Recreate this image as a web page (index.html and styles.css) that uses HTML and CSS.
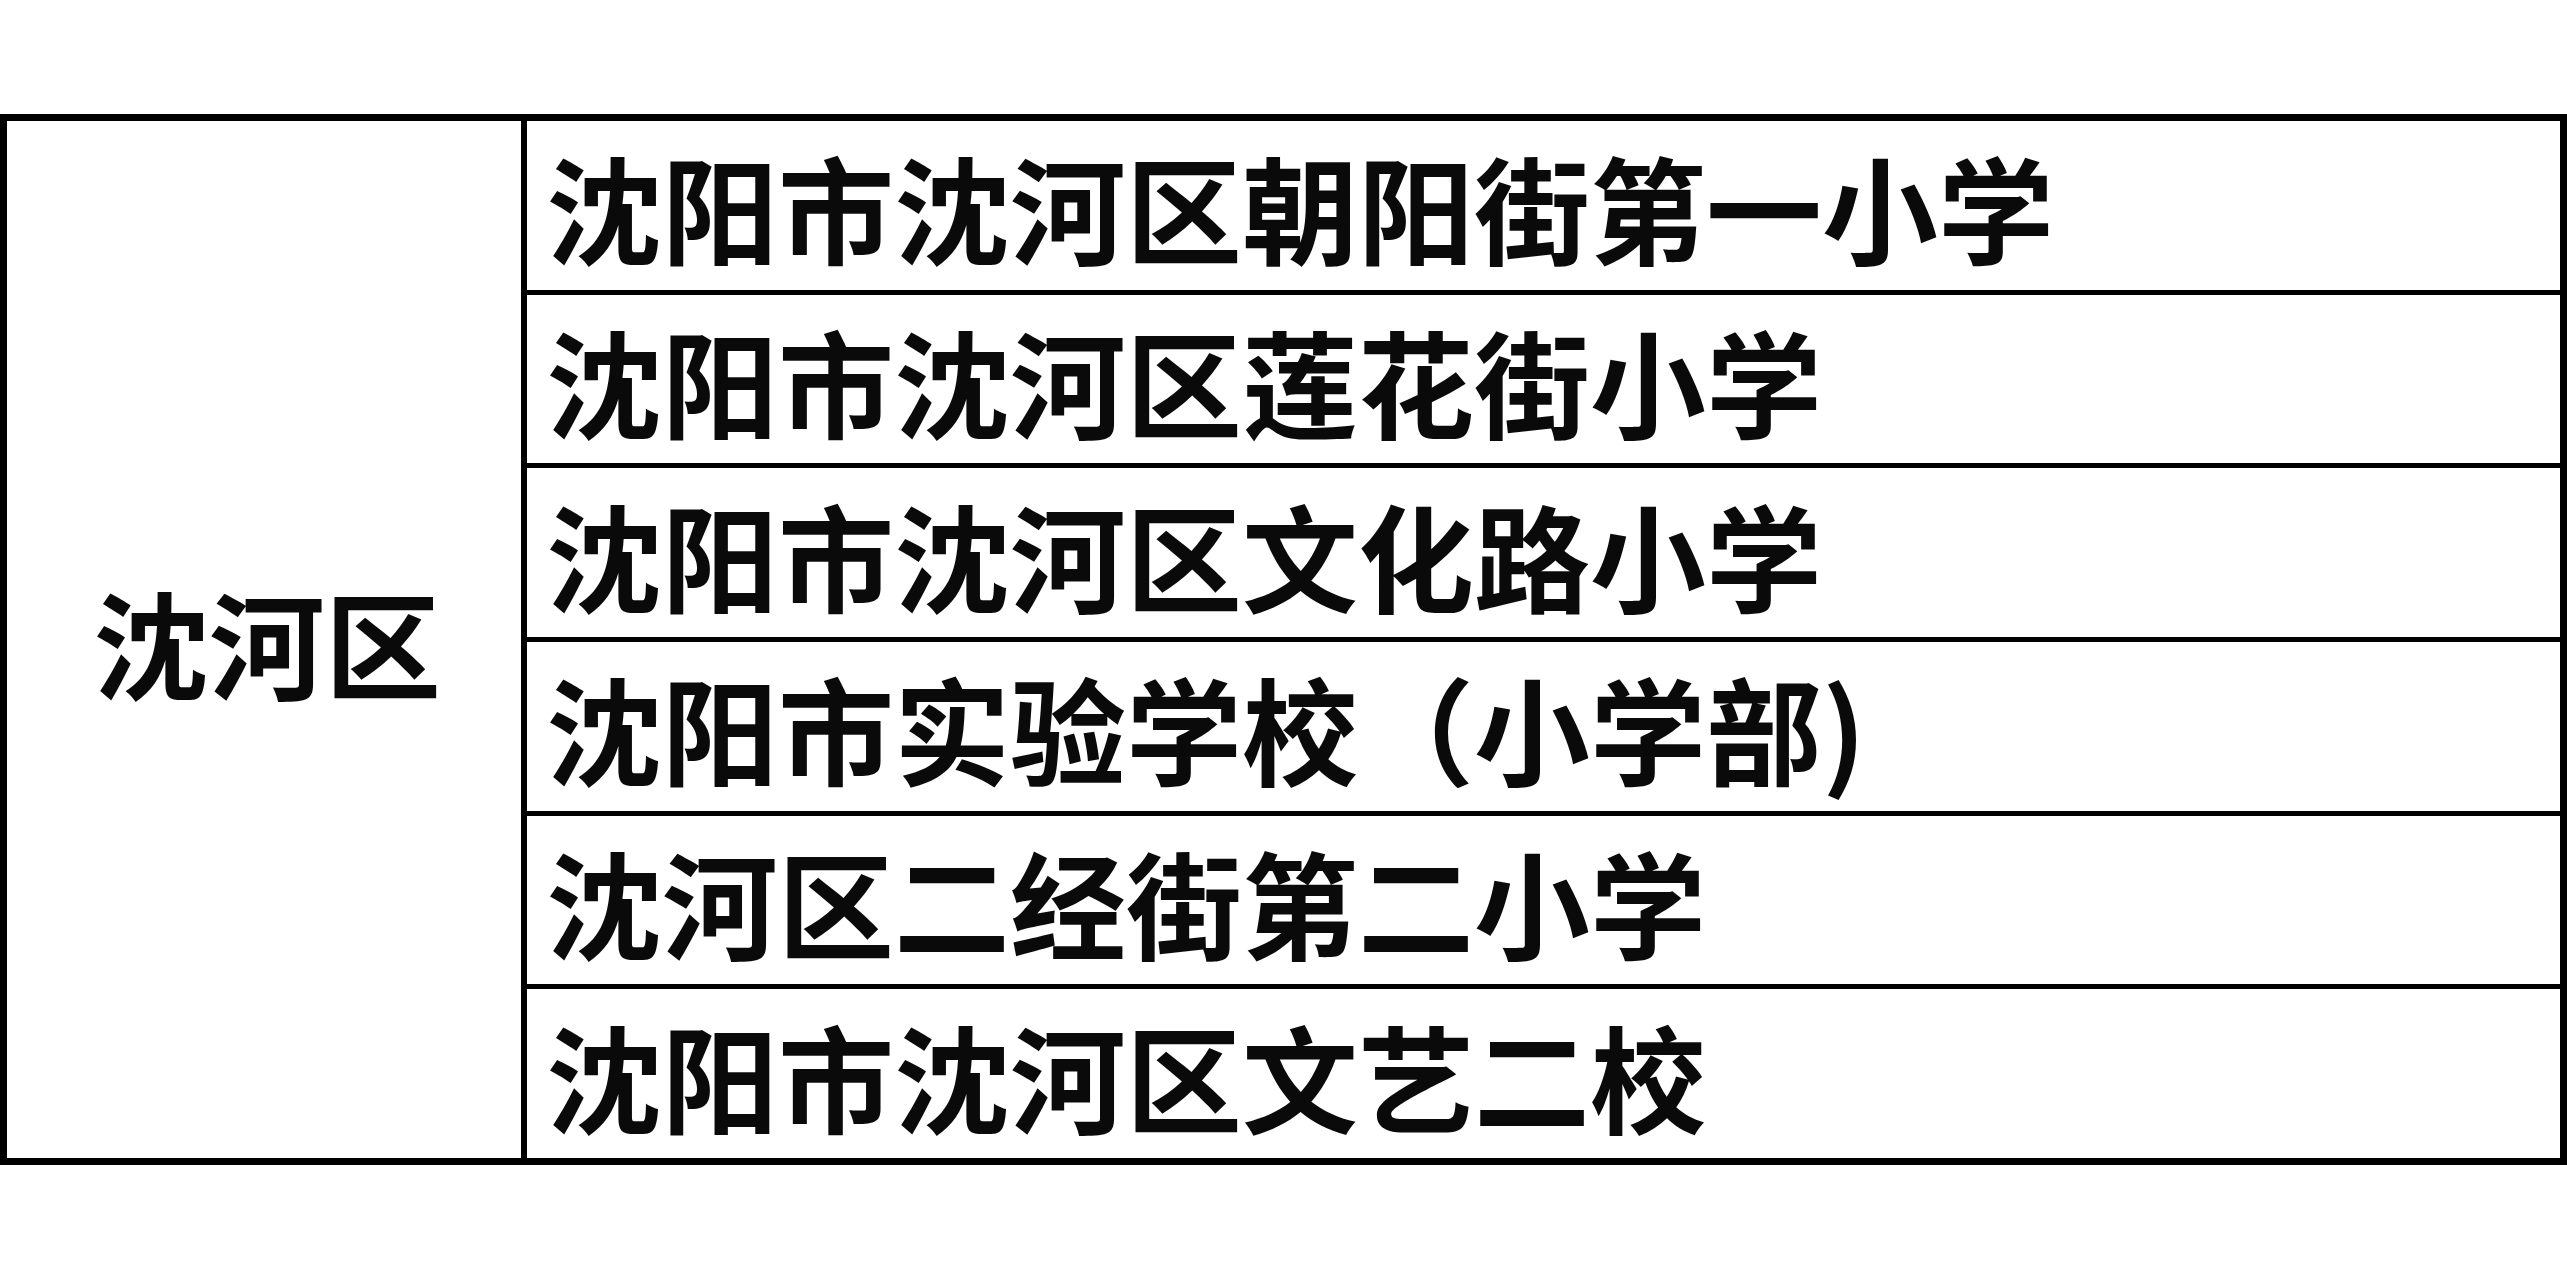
FILE: index.html
```html
<!DOCTYPE html>
<html lang="zh-CN">
<head>
<meta charset="utf-8">
<title>沈河区小学</title>
<link rel="stylesheet" href="styles.css">
</head>
<body>
<div class="page">
  <div class="sheet">
    <div class="district">沈河区</div>
    <div class="school">沈阳市沈河区朝阳街第一小学</div>
    <div class="school">沈阳市沈河区莲花街小学</div>
    <div class="school">沈阳市沈河区文化路小学</div>
    <div class="school">沈阳市实验学校（小学部)</div>
    <div class="school">沈河区二经街第二小学</div>
    <div class="school">沈阳市沈河区文艺二校</div>
  </div>
</div>
</body>
</html>
```

FILE: styles.css
```css
html, body {
  margin: 0;
  padding: 0;
  background: #ffffff;
}

.page {
  width: 2567px;
  height: 1280px;
  padding-top: 114px;
  box-sizing: border-box;
  overflow: hidden;
}

.sheet {
  box-sizing: border-box;
  width: 2567px;
  height: 1051px;
  border: 7px solid #000;
  background: #000;
  display: grid;
  grid-template-columns: 514px 1fr;
  grid-template-rows: repeat(6, 1fr);
  column-gap: 6px;
  row-gap: 5px;
  font-family: "Noto Sans CJK SC", "Noto Sans", sans-serif;
  font-weight: 700;
  font-size: 116px;
  line-height: 1;
  color: #0a0a0a;
}

.district {
  grid-row: 1 / span 6;
  grid-column: 1;
  background: #fff;
  display: flex;
  align-items: center;
  justify-content: center;
  padding-left: 6px;
}

.school {
  grid-column: 2;
  background: #fff;
  display: flex;
  align-items: center;
  padding-left: 19px;
  white-space: nowrap;
}
```
